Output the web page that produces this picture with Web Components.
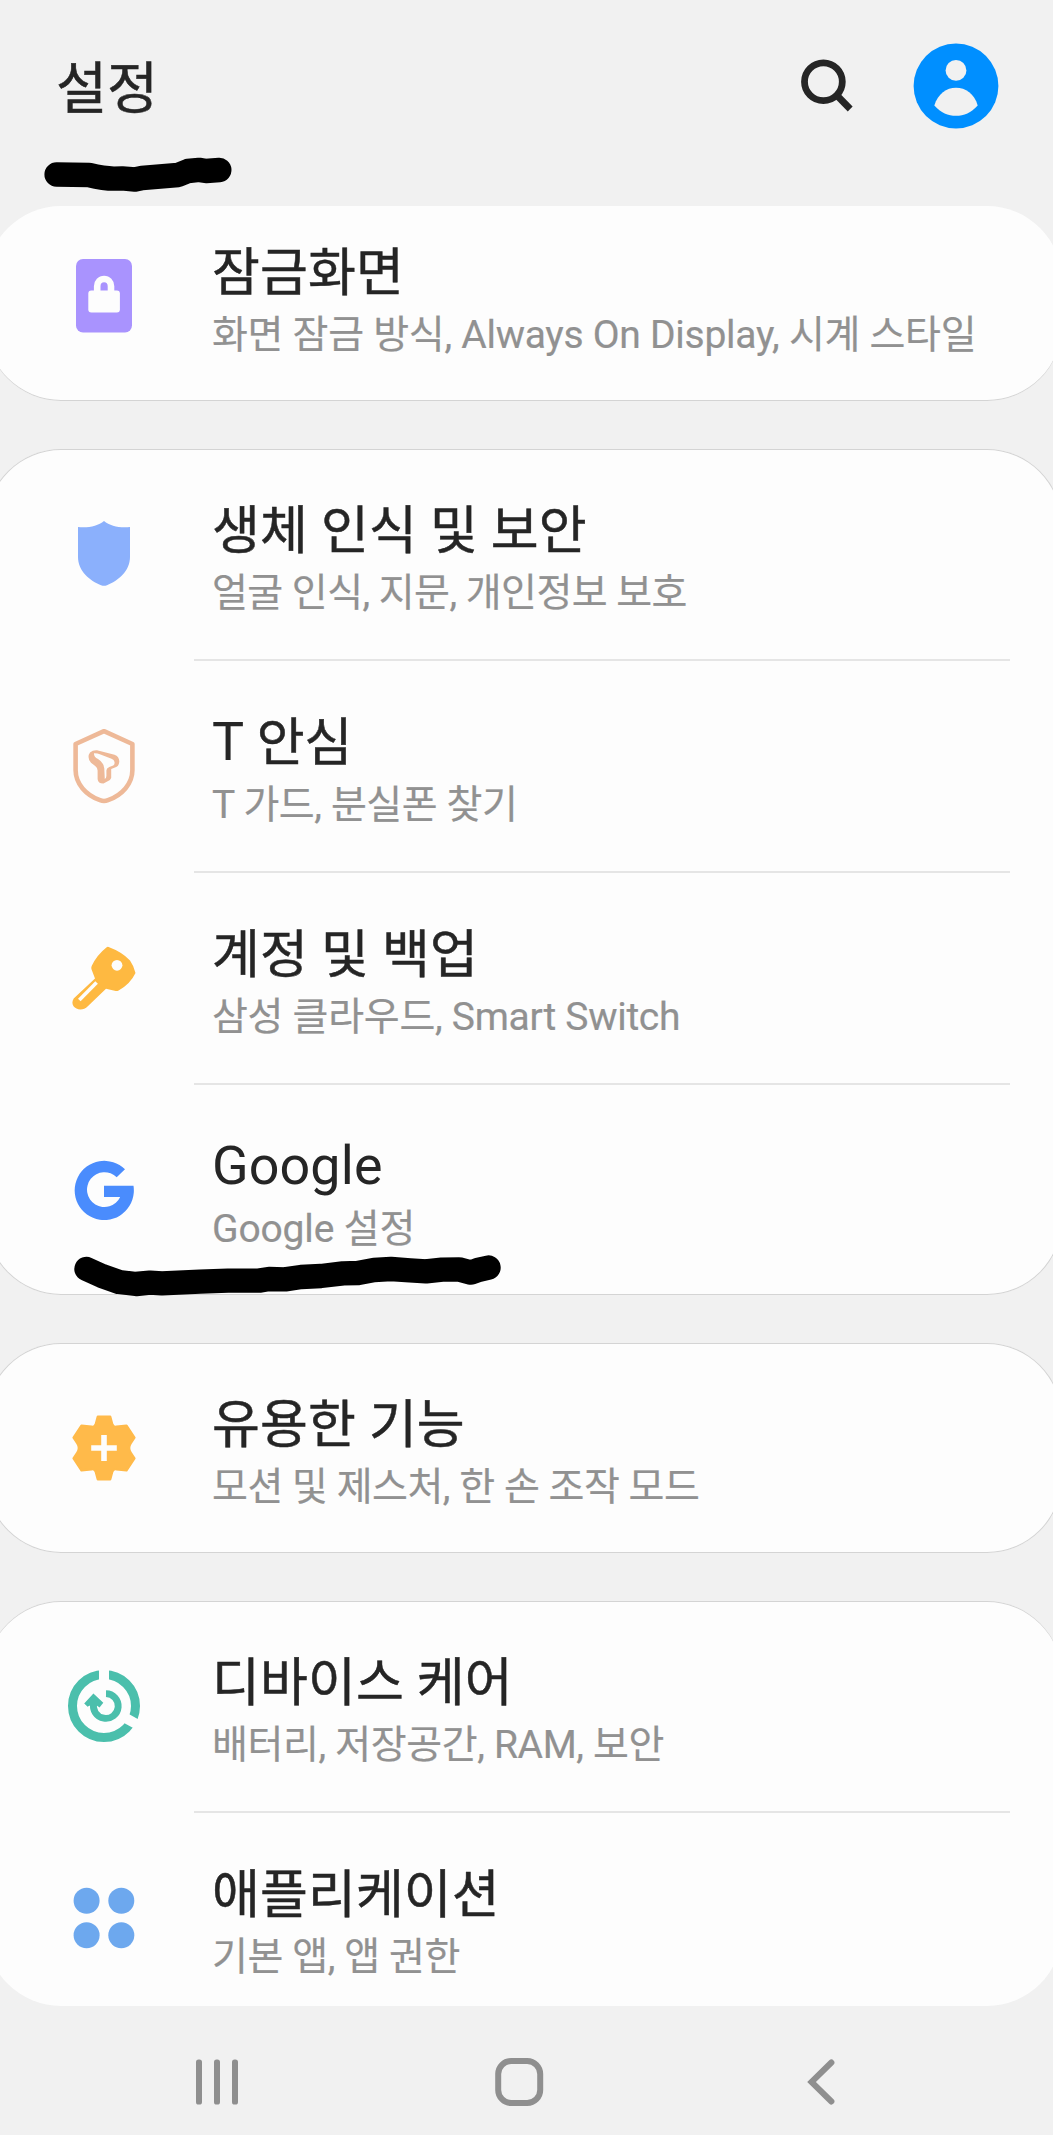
<!DOCTYPE html>
<html lang="ko">
<head>
<meta charset="utf-8">
<title>설정</title>
<style>
  html, body { margin: 0; background: #f1f1f1; }
  body { width: 1053px; height: 2135px; overflow: hidden; font-family: Roboto, "Noto Sans CJK KR", sans-serif; }
  .latin { font-size: 53.8px; line-height: 50px; vertical-align: 1px; -webkit-text-stroke-width: 0; }
</style>
</head>
<body>
<settings-screen>
  <settings-header slot="header">설정</settings-header>
  <settings-card class="first">
    <settings-row icon="lock" spacing="-0.27"><span>잠금화면</span><span slot="sub">화면 잠금 방식, Always On Display, 시계 스타일</span></settings-row>
  </settings-card>
  <settings-card>
    <settings-row icon="shield" spacing="-0.54"><span>생체 인식 및 보안</span><span slot="sub">얼굴 인식, 지문, 개인정보 보호</span></settings-row>
    <settings-row icon="guard" spacing="-0.4" divided><span><span class="latin">T </span>안심</span><span slot="sub">T 가드, 분실폰 찾기</span></settings-row>
    <settings-row icon="key" spacing="-0.28" divided><span>계정 및 백업</span><span slot="sub">삼성 클라우드, Smart Switch</span></settings-row>
    <settings-row icon="google" spacing="-0.15" divided><span class="latin">Google</span><span slot="sub">Google 설정</span></settings-row>
  </settings-card>
  <settings-card>
    <settings-row icon="gear" spacing="-0.47"><span>유용한 기능</span><span slot="sub">모션 및 제스처, 한 손 조작 모드</span></settings-row>
  </settings-card>
  <settings-card class="last">
    <settings-row icon="care" spacing="-0.36"><span>디바이스 케어</span><span slot="sub">배터리, 저장공간, RAM, 보안</span></settings-row>
    <settings-row icon="apps" spacing="-0.4" divided><span>애플리케이션</span><span slot="sub">기본 앱, 앱 권한</span></settings-row>
  </settings-card>
  <system-nav slot="nav"></system-nav>
</settings-screen>

<script>
const ICONS = {
  lock: `<rect x="12" y="3" width="56" height="73.6" rx="7" fill="#a993fe"/>
    <rect x="24.3" y="34.6" width="31.6" height="22" rx="3" fill="#fdfdfd"/>
    <path d="M33.2 37V30.2a6.9 7.2 0 0 1 13.8 0V37" fill="none" stroke="#fdfdfd" stroke-width="6.6"/>`,
  shield: `<path d="M40 7C46 12 56 14.2 66 13V43C66 57 54 67 43 71.2Q40 72.4 37 71.2C26 67 14 57 14 43V13C24 14.2 34 12 40 7Z" fill="#8bb0fc"/>`,
  guard: `<path d="M40 5.2L11.6 18V44C11.6 58 22 69 36 74.2Q40 75.8 44 74.2C58 69 68.4 58 68.4 44V18Z" fill="none" stroke="#eeb998" stroke-width="4.6" stroke-linejoin="round"/>
    <path fill-rule="evenodd" fill="#eeb998" d="M26 26.6Q29 23.8 33 24.2L50.5 28.8Q55.2 30.6 55.3 35.5Q55 40.4 51 41.6L47.2 43V52Q46.4 54.6 43.2 55.6L39.5 57.5Q34 57.6 33.6 53V44.5Q33.6 41.8 31.2 40L27 36.8Q22.6 31.4 26 26.6ZM30 27.2Q29.6 31 34 33Q39.8 36.5 40.3 42.5L40.8 53Q42.5 52 42.4 49.5V44.5Q42.4 42 45.3 41L49.2 39.6Q50.9 38.5 50.5 36Q50.2 33.6 47.5 32.7L36.5 28.4Q33 27 30 27.2Z"/>`,
  key: `<path d="M44.6 9Q58 14 66 22.4Q70 28 71.5 35Q66.2 46.2 54.6 52.4Q53.2 53.3 51.7 53L42 50.8L23.8 68.2C17 75.5 4.3 69.4 9.7 60.6L31 40.4L27.4 31Q27 29.2 27.8 27.7Q33 16.8 42.7 9.2Q43.5 8.6 44.6 9Z" fill="#feb941"/>
    <circle cx="53" cy="27.3" r="5.4" fill="#fdfdfd"/><path d="M32.6 44.5L15.3 62" stroke="#fdfdfd" stroke-width="3.6"/>`,
  google: `<path d="M61 19.3A29.6 29.6 0 1 0 69.5 35.8H40V47H56.2A17.4 17.4 0 1 1 52.7 27.3Z" fill="#4a8cfd"/>`,
  gear: `<path d="M33.8 8.8H46.2L48.3 16.5Q49.4 19.4 52.5 18.8L62.5 17.7L70.4 29.6L66.6 35.4Q63.6 40 66.6 44.6L70.4 50.4L62.5 62.3L52.5 61.2Q49.4 60.6 48.3 63.5L46.2 71.2H33.8L31.7 63.5Q30.6 60.6 27.5 61.2L17.5 62.3L9.6 50.4L13.4 44.6Q16.4 40 13.4 35.4L9.6 29.6L17.5 17.7L27.5 18.8Q30.6 19.4 31.7 16.5Z" fill="#ffba4a" stroke="#ffba4a" stroke-width="2.4" stroke-linejoin="round"/>
    <path d="M40 27V53M27.2 40H52.8" stroke="#fdfdfd" stroke-width="5.6"/>`,
  care: `<circle cx="40" cy="40" r="31.5" fill="none" stroke="#4bbfac" stroke-width="9"/>
    <path d="M40 20V2M57 49.5L78 61" stroke="#fdfdfd" stroke-width="10"/>
    <path d="M42 27.6A12.4 12.4 0 1 1 29.8 37" fill="none" stroke="#4bbfac" stroke-width="6.8"/>
    <path d="M29.4 27.4L39.3 36.8L35.5 41.4L32.8 39.4L27 42.4L25.6 39.6L23.6 40.8L20.2 37.6Z" fill="#4bbfac"/>`,
  apps: `<g fill="#6da8ee"><circle cx="22.6" cy="22.8" r="13"/><circle cx="57.3" cy="22.8" r="13"/><circle cx="22.6" cy="57.2" r="13"/><circle cx="57.3" cy="57.2" r="13"/></g>`
};

function define(name, render) {
  customElements.define(name, class extends HTMLElement {
    constructor() {
      super();
      this.attachShadow({ mode: 'open' });
    }
    connectedCallback() {
      this.shadowRoot.innerHTML = render(this);
    }
  });
}

define('settings-screen', () => `
  <style>
    :host { display: flex; flex-direction: column; position: relative; width: 1053px; height: 2135px; overflow: hidden; background: #f1f1f1; }
    main { display: flex; flex-direction: column; gap: 48px; height: 1800px; flex: none; }
    .ink { position: absolute; left: 0; top: 0; pointer-events: none; }
  </style>
  <slot name="header"></slot>
  <main><slot></slot></main>
  <slot name="nav"></slot>
  <svg class="ink" width="1053" height="2135" fill="none" stroke="#000" stroke-width="24.4" stroke-linecap="round" stroke-linejoin="round">
    <path d="M56.6 174.5L89 175Q104 178.5 114 178.6L122 178.4L135 179.5L142 178L178 175L188 171L199 169.9L206 171L219.3 170"/>
    <path d="M86.5 1269L102 1276L119 1282L136 1284L150 1282.6L162 1283.4L200 1281.6L228 1280.6L259 1280.6L269 1279L285 1279.4L301 1277L321 1276L343 1273.4L358 1273L374 1270L391 1269L410 1270.4L426 1271.4L442 1269.6L459 1269.4L471 1272.6L478 1270L488.5 1267.6"/>
  </svg>`);

define('settings-header', () => `
  <style>
    :host { display: flex; align-items: center; height: 206px; flex: none; box-sizing: border-box; padding: 0 54px 34px 56px; color: #252525; }
    h1 { flex: 1; margin: 8px 0 0; font-size: 55.5px; line-height: 64px; font-weight: 400; -webkit-text-stroke: 0.5px #252525; }
    svg { display: block; }
    .search { margin-right: 56px; }
  </style>
  <h1><slot></slot></h1>
  <svg class="search" width="60" height="60" viewBox="0 0 60 60" fill="none" stroke="#252525" stroke-width="6.8"><circle cx="26.4" cy="25.8" r="18.9"/><path d="M40 39.5L53.2 53"/></svg>
  <svg width="86" height="86" viewBox="0 0 86 86"><circle cx="43" cy="43" r="42.4" fill="#008fff"/><g fill="#f1f1f1"><circle cx="43" cy="27.4" r="10.4"/><path d="M21.3 62.4C25 50.8 33.5 44.8 43 44.8S61.4 50.8 64.7 62.4C58 69.8 51 72.8 43 72.8S28 69.8 21.3 62.4Z"/></g></svg>`);

define('settings-card', () => `
  <style>
    :host { display: flex; flex-direction: column; flex: none; margin: 0 -9px 0 -14px; border-radius: 75px; background: #fdfdfd; overflow: hidden; box-shadow: inset 0 0 0 1px #d4d4d4; }
    :host(.first) { height: 195px; justify-content: flex-end; box-shadow: inset 0 -1px 0 #d4d4d4; }
    :host(.last) { height: 405px; box-shadow: inset 0 1px 0 #d4d4d4; }
  </style>
  <slot></slot>`);

define('settings-row', el => `
  <style>
    :host { display: flex; flex-direction: column; flex: none; }
    .line { height: 2px; margin: 0 52px 0 208px; background: #e5e5e5; }
    .row { display: flex; align-items: center; height: 210px; padding-left: 78px; gap: 68px; }
    svg { flex: none; display: block; }
    .text { display: flex; flex-direction: column; align-self: flex-start; gap: 8px; padding-top: 53px; white-space: nowrap; }
    .title { height: 60px; font-size: 52px; line-height: 60px; color: #252525; letter-spacing: 0.12px; -webkit-text-stroke: 0.5px #252525; }
    .sub { font-size: 39px; line-height: 46px; color: #919191; letter-spacing: ${el.getAttribute('spacing')}px; -webkit-text-stroke: 0.2px #919191; }
  </style>
  ${el.hasAttribute('divided') ? '<div class="line"></div>' : ''}
  <div class="row">
    <svg width="80" height="80" viewBox="0 0 80 80">${ICONS[el.getAttribute('icon')]}</svg>
    <div class="text">
      <div class="title"><slot></slot></div>
      <div class="sub"><slot name="sub"></slot></div>
    </div>
  </div>`);

define('system-nav', () => `
  <style>
    :host { display: flex; align-items: center; flex: none; height: 129px; box-sizing: border-box; padding: 0 0 0 187px; gap: 242px; }
    svg { display: block; margin-top: 23px; }
  </style>
  <svg width="60" height="60" viewBox="0 0 60 60" fill="#8f8f8f"><rect x="9" y="7.5" width="6" height="45" rx="2.6"/><rect x="27" y="7.5" width="6" height="45" rx="2.6"/><rect x="45" y="7.5" width="6" height="45" rx="2.6"/></svg>
  <svg width="60" height="60" viewBox="0 0 60 60" fill="none" stroke="#8f8f8f" stroke-width="6"><rect x="9.2" y="9" width="42" height="42" rx="13"/></svg>
  <svg width="60" height="60" viewBox="0 0 60 60" fill="none" stroke="#8f8f8f" stroke-width="6" stroke-linecap="round"><path d="M40.4 10.5L20.5 30L40.4 49.5"/></svg>`);
</script>
</body>
</html>
